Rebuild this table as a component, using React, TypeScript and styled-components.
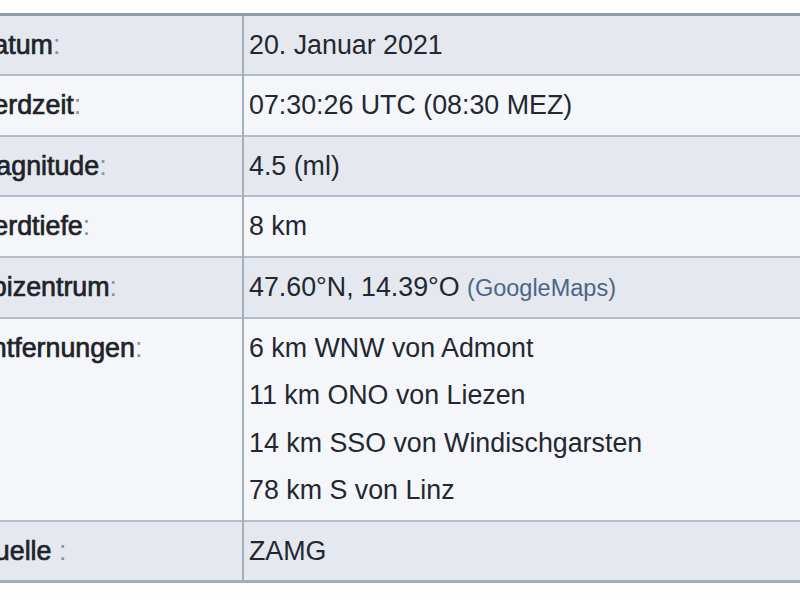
import styled, { createGlobalStyle } from "styled-components";

const GlobalStyle = createGlobalStyle`
  html, body {
    margin: 0;
    padding: 0;
    background: #fdfdfd;
  }
  body {
    font-family: "Liberation Sans", Arial, sans-serif;
    overflow: hidden;
  }
`;

const Page = styled.div`
  width: 800px;
  height: 600px;
  overflow: hidden;
  padding-top: 13px;
  box-sizing: border-box;
`;

const Table = styled.table`
  margin-left: -33px;
  width: 900px;
  border-collapse: collapse;
  border-top: 3px solid #8f9ba8;
  border-bottom: 3px solid #a3aebb;
  font-size: 26.8px;
  line-height: 47.4px;
  color: #222831;
`;

const Row = styled.tr<{ $alt?: boolean }>`
  background: ${(p) => (p.$alt ? "#f4f6f9" : "#e5e9ef")};
  border-top: 2px solid #b3bdc8;
`;

const LabelCell = styled.td`
  width: 262px;
  padding: 6px 6px 5px 7px;
  vertical-align: top;
  border-right: 2px solid #a5b0bd;
  color: #1e232a;
  -webkit-text-stroke: 0.7px #1e232a;
  white-space: nowrap;
`;

const Colon = styled.span`
  color: #8a939e;
  -webkit-text-stroke: 0;
`;

const ValueCell = styled.td`
  padding: 6px 6px 5px 5px;
  vertical-align: top;
  white-space: nowrap;
`;

const Line = styled.div``;

const MapLink = styled.a`
  font-size: 23.5px;
  color: #4a6686;
  text-decoration: none;
`;

const rows: { label: string; colon: string; values: React.ReactNode[] }[] = [
  { label: "Datum", colon: ":", values: ["20. Januar 2021"] },
  { label: "Herdzeit", colon: ":", values: ["07:30:26 UTC (08:30 MEZ)"] },
  { label: "Magnitude", colon: ":", values: ["4.5 (ml)"] },
  { label: "Herdtiefe", colon: ":", values: ["8 km"] },
  {
    label: "Epizentrum",
    colon: ":",
    values: [
      <>
        47.60°N, 14.39°O <MapLink href="#">(GoogleMaps)</MapLink>
      </>,
    ],
  },
  {
    label: "Entfernungen",
    colon: ":",
    values: [
      "6 km WNW von Admont",
      "11 km ONO von Liezen",
      "14 km SSO von Windischgarsten",
      "78 km S von Linz",
    ],
  },
  { label: "Quelle", colon: " :", values: ["ZAMG"] },
];

const App = () => {
  return (
    <>
      <GlobalStyle />
      <Page>
        <Table>
          <tbody>
            {rows.map((row, i) => (
              <Row key={row.label} $alt={i % 2 === 1}>
                <LabelCell>
                  {row.label}
                  <Colon>{row.colon}</Colon>
                </LabelCell>
                <ValueCell>
                  {row.values.map((v, j) => (
                    <Line key={j}>{v}</Line>
                  ))}
                </ValueCell>
              </Row>
            ))}
          </tbody>
        </Table>
      </Page>
    </>
  );
};

export default App;
